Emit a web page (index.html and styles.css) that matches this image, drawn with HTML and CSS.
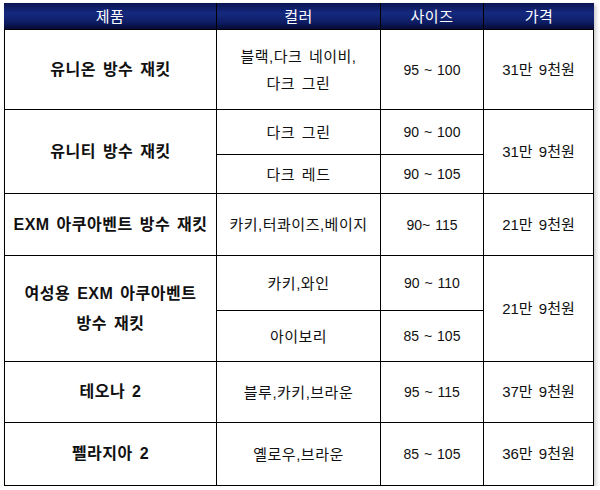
FILE: index.html
```html
<!DOCTYPE html>
<html lang="ko">
<head>
<meta charset="utf-8">
<title>방수 재킷 가격표</title>
<link rel="stylesheet" href="styles.css">
</head>
<body>
<div class="table">
  <div class="th">제품</div>
  <div class="th">컬러</div>
  <div class="th">사이즈</div>
  <div class="th">가격</div>

  <div class="td name">유니온 방수 재킷</div>
  <div class="td color">블랙,다크 네이비,<br>다크 그린</div>
  <div class="td size">95 ~ 100</div>
  <div class="td price">31만 9천원</div>

  <div class="td name span2">유니티 방수 재킷</div>
  <div class="td color">다크 그린</div>
  <div class="td size">90 ~ 100</div>
  <div class="td price span2">31만 9천원</div>
  <div class="td color">다크 레드</div>
  <div class="td size">90 ~ 105</div>

  <div class="td name">EXM 아쿠아벤트 방수 재킷</div>
  <div class="td color">카키,터콰이즈,베이지</div>
  <div class="td size">90~ 115</div>
  <div class="td price">21만 9천원</div>

  <div class="td name span2">여성용 EXM 아쿠아벤트<br>방수 재킷</div>
  <div class="td color">카키,와인</div>
  <div class="td size">90 ~ 110</div>
  <div class="td price span2">21만 9천원</div>
  <div class="td color">아이보리</div>
  <div class="td size">85 ~ 105</div>

  <div class="td name">테오나 2</div>
  <div class="td color">블루,카키,브라운</div>
  <div class="td size">95 ~ 115</div>
  <div class="td price">37만 9천원</div>

  <div class="td name">펠라지아 2</div>
  <div class="td color">옐로우,브라운</div>
  <div class="td size">85 ~ 105</div>
  <div class="td price">36만 9천원</div>
</div>
</body>
</html>
```
FILE: styles.css
```css
html, body {
  margin: 0;
  padding: 0;
  background: #ffffff;
}

body {
  font-family: "Liberation Sans", "Noto Sans CJK KR", sans-serif;
  color: #111111;
}

.table {
  margin: 3px 0 0 4px;
  width: 590px;
  box-sizing: border-box;
  display: grid;
  grid-template-columns: 211px 163px 102px 109px;
  grid-template-rows: 26px 79px 44px 38px 61px 54px 50px 60px 62px;
  gap: 1px;
  background: #000000;
  border: 1px solid #000000;
  border-top: 0;
  box-shadow: 2px 2px 4px rgba(0, 0, 0, 0.22);
}

.th {
  display: flex;
  align-items: center;
  justify-content: center;
  background: linear-gradient(#0a1552 0%, #15297e 40%, #0e1e66 72%, #050b36 100%);
  color: #ffffff;
  font-size: 15px;
  letter-spacing: 0.5px;
  line-height: 1;
}

.th:first-child {
  margin-left: -1px;
}

.th:nth-child(4) {
  margin-right: -1px;
}

.td {
  display: flex;
  align-items: center;
  justify-content: center;
  text-align: center;
  background: #ffffff;
  font-size: 15px;
}

.span2 {
  grid-row: span 2;
}

.name {
  font-size: 16px;
  font-weight: bold;
  letter-spacing: 0.5px;
  word-spacing: 2px;
  line-height: 30px;
}

.color {
  letter-spacing: 0.5px;
  word-spacing: 2px;
  line-height: 27px;
}

.size {
  font-size: 14px;
  word-spacing: 1px;
  line-height: 20px;
}

.price {
  word-spacing: 2px;
  line-height: 20px;
}
```
